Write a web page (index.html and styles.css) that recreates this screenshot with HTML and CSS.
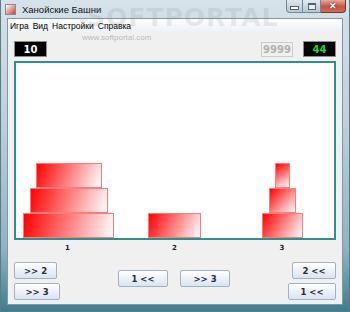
FILE: index.html
```html
<!DOCTYPE html>
<html>
<head>
    <meta charset="utf-8">
    <title>Ханойские Башни</title>
    <link rel="stylesheet" href="styles.css">
</head>
<body>
    <div class="window">
        <div class="titlebar">
            <span class="appicon"></span>
            <span class="title">Ханойские Башни</span>
            <div class="winbuttons">
                <span class="wb min"><i></i></span>
                <span class="wb max"><i></i></span>
                <span class="wb close">✕</span>
            </div>
        </div>
        <div class="client">
            <div class="menubar">
                <span>Игра</span>
                <span>Вид</span>
                <span>Настройки</span>
                <span>Справка</span>
            </div>
            <div class="content">
                <div class="counters">
                    <div class="counter dark">10</div>
                    <div class="watermark-url">www.softportal.com</div>
                    <div class="counter best">9999</div>
                    <div class="counter dark green">44</div>
                </div>
                <div class="board">
                    <div class="peg">
                        <div class="disk" style="width:91px; background:linear-gradient(105deg, #ff0000, #ffffff)"></div>
                        <div class="disk" style="width:78px; background:linear-gradient(108deg, #ff0000, #ffffff)"></div>
                        <div class="disk" style="width:66px; background:linear-gradient(111deg, #ff0000, #ffffff)"></div>
                    </div>
                    <div class="peg">
                        <div class="disk" style="width:53px; background:linear-gradient(115deg, #ff0000, #ffffff)"></div>
                    </div>
                    <div class="peg">
                        <div class="disk" style="width:41px; background:linear-gradient(121deg, #ff0000, #ffffff)"></div>
                        <div class="disk" style="width:27px; background:linear-gradient(133deg, #ff0000, #ffffff)"></div>
                        <div class="disk" style="width:15px; background:linear-gradient(149deg, #ff0000, #ffffff)"></div>
                    </div>
                </div>
                <div class="labels">
                    <span>1</span>
                    <span>2</span>
                    <span>3</span>
                </div>
                <div class="controls">
                    <div class="col left">
                        <button class="btn w43">&gt;&gt; 2</button>
                        <button class="btn w46">&gt;&gt; 3</button>
                    </div>
                    <div class="middle">
                        <button class="btn w50">1 &lt;&lt;</button>
                        <button class="btn w50">&gt;&gt; 3</button>
                    </div>
                    <div class="col right">
                        <button class="btn w44">2 &lt;&lt;</button>
                        <button class="btn w48">1 &lt;&lt;</button>
                    </div>
                </div>
            </div>
        </div>
        <div class="watermark">SOFTPORTAL</div>
    </div>
</body>
</html>
```

FILE: styles.css
```css
html,
body {
    margin: 0;
    padding: 0;
}

body {
    width: 350px;
    height: 312px;
    overflow: hidden;
    font-family: 'Liberation Sans', Arial, sans-serif;
}

.window {
    width: 350px;
    height: 312px;
    box-sizing: border-box;
    padding: 0 6px 6px 6px;
    display: flex;
    flex-direction: column;
    background: linear-gradient(#d6e2ea 0%, #bccfdb 40%, #8fb3c2 80%, #3d7f8e 100%);
    border: 1px solid #5d7a88;
    border-top: none;
    position: relative;
}

.titlebar {
    height: 18px;
    display: flex;
    align-items: center;
    margin: 0 -6px;
    padding-left: 4px;
}

.appicon {
    width: 9px;
    height: 9px;
    border: 1px solid #8a8a8a;
    background: linear-gradient(135deg, #ffffff, #d04030);
    margin-right: 6px;
}

.title {
    font-size: 9.5px;
    color: #111;
}

.winbuttons {
    margin-left: auto;
    margin-right: 3px;
    align-self: flex-start;
    display: flex;
}

.wb {
    height: 12px;
    border: 1px solid #6f8796;
    border-top: none;
    background: linear-gradient(#dfe8ee, #b7c8d3);
    display: flex;
    align-items: center;
    justify-content: center;
}

.wb.min {
    width: 15px;
    border-radius: 0 0 0 4px;
}

.wb.min i {
    width: 7px;
    height: 2px;
    background: #fff;
    border: 1px solid #55606a;
    margin-top: 4px;
}

.wb.max {
    width: 17px;
    border-left: none;
}

.wb.max i {
    width: 6px;
    height: 4px;
    border: 1px solid #55606a;
    border-top-width: 2px;
    background: #e8eef2;
}

.wb.close {
    width: 24px;
    border-left: none;
    border-color: #6b3a36;
    border-radius: 0 0 4px 0;
    background: linear-gradient(#e9a99c, #c7523f 55%, #d36d52);
    color: #fff;
    font-size: 9px;
    font-weight: bold;
    text-shadow: 0 0 2px #5a1a10;
}

.client {
    flex: 1;
    background: #f0f0f0;
    border: 1px solid #7f98a6;
    display: flex;
    flex-direction: column;
    overflow: hidden;
}

.menubar {
    height: 13px;
    display: flex;
    align-items: center;
    gap: 4px;
    padding-left: 2px;
    background: linear-gradient(#fdfdfe, #eef1f5);
    font-size: 8.5px;
    color: #000;
}

/* site watermark laid over the title and menu */
.watermark {
    position: absolute;
    left: 86px;
    top: 3px;
    font-family: 'DejaVu Sans', sans-serif;
    font-size: 25px;
    font-weight: bold;
    letter-spacing: 1px;
    color: rgba(130, 130, 130, 0.16);
    pointer-events: none;
}

.watermark-url {
    align-self: flex-start;
    margin-left: 25px;
    margin-top: -8px;
    font-size: 8px;
    color: rgba(110, 110, 110, 0.45);
}

.content {
    flex: 1;
    padding: 9px 6px 0 6px;
    display: flex;
    flex-direction: column;
}

.counters {
    display: flex;
    align-items: center;
    gap: 10px;
    height: 16px;
}

.counter {
    width: 33px;
    height: 16px;
    box-sizing: border-box;
    display: flex;
    align-items: center;
    justify-content: center;
    font-family: 'DejaVu Sans', sans-serif;
    font-size: 10px;
    font-weight: bold;
}

.counter.dark {
    background: #000;
    color: #fff;
    border: 1px solid #8c8c8c;
}

.counter.green {
    color: #22d822;
}

.counter.best {
    margin-left: auto;
    width: 32px;
    height: 15px;
    color: #b0b0b0;
    border: 1px solid #cacaca;
    background: #f0f0f0;
}

.board {
    margin-top: 4px;
    height: 179px;
    box-sizing: border-box;
    border: 2px solid #2f8f8f;
    background: #fff;
    display: grid;
    grid-template-columns: 105px 107px 108px;
}

.peg {
    display: flex;
    flex-direction: column-reverse;
    align-items: center;
}

.disk {
    height: 25px;
    box-sizing: border-box;
    border: 1px solid #ff7c7c;
}

.labels {
    display: grid;
    grid-template-columns: 107px 107px 108px;
    height: 16px;
    align-items: center;
    font-family: 'DejaVu Sans', sans-serif;
    font-size: 7px;
    font-weight: bold;
    color: #222;
    text-align: center;
}

.controls {
    margin-top: 6px;
    display: flex;
    justify-content: space-between;
    align-items: flex-start;
}

.col {
    display: flex;
    flex-direction: column;
    gap: 4px;
}

.col.left {
    align-items: flex-start;
}

.col.right {
    align-items: flex-end;
}

.middle {
    display: flex;
    gap: 12px;
    margin-top: 8px;
}

.btn {
    height: 17px;
    padding: 0;
    border: 1px solid #a3b1c2;
    border-radius: 2px;
    background: linear-gradient(#ffffff, #eef3f9 45%, #d8e4f2);
    font-family: 'DejaVu Sans', sans-serif;
    font-size: 8.5px;
    font-weight: bold;
    color: #2a2a3a;
}

.w43 { width: 43px; }
.w44 { width: 44px; }
.w46 { width: 46px; }
.w48 { width: 48px; }
.w50 { width: 50px; }
```
